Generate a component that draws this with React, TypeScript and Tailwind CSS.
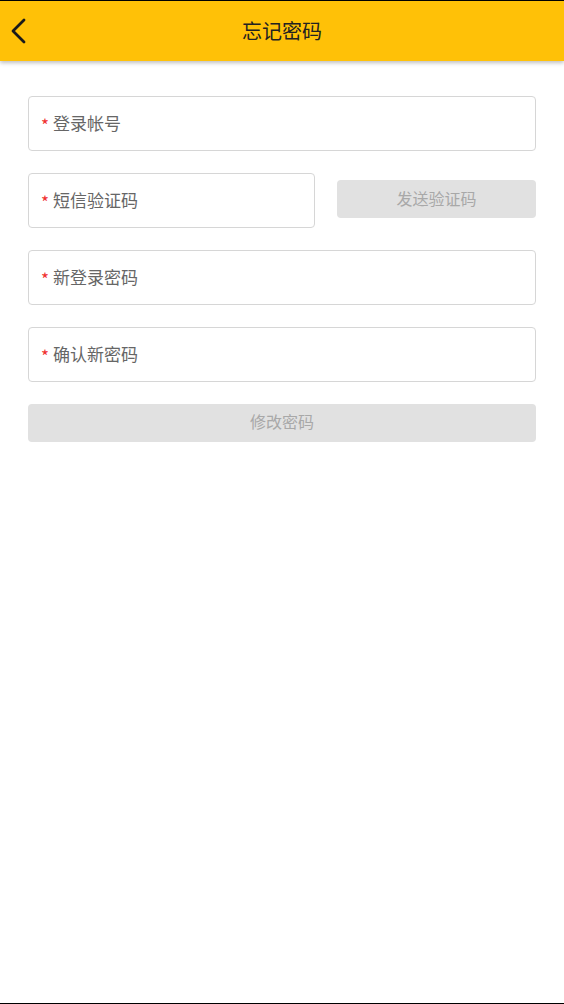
import React from "react";

const font = { fontFamily: '"Noto Sans CJK SC", "Noto Sans", sans-serif' };

function Field({ label, className = "" }: { label: string; className?: string }) {
  return (
    <div
      className={`h-[55px] rounded-[4px] border border-[#d6d6d6] bg-white flex items-center pl-[12px] pb-[2px] ${className}`}
    >
      <span className="text-[#f0302f] text-[17px] leading-none mr-[4px] mt-[4px]">*</span>
      <span className="text-[#666666] text-[17px] leading-none">{label}</span>
    </div>
  );
}

export default function App() {
  return (
    <div className="w-[564px] h-[1004px] bg-white flex flex-col border-t border-b border-black overflow-hidden" style={font}>
      <div className="relative h-[60px] bg-[#ffc107] flex items-center justify-center shadow-[0_2px_4px_rgba(0,0,0,0.25)] z-10">
        <button className="absolute left-[6px] top-0 h-full w-[24px] flex items-center justify-center">
          <svg width="17" height="26" viewBox="0 0 17 26" fill="none">
            <path d="M14 2 L3 13 L14 24" stroke="#1a1a1a" strokeWidth="2.8" strokeLinecap="round" strokeLinejoin="round" />
          </svg>
        </button>
        <span className="text-[20px] text-[#222222] leading-none">忘记密码</span>
      </div>
      <div className="flex flex-col px-[28px] pt-[35px] gap-[22px]">
        <Field label="登录帐号" />
        <div className="flex items-start gap-[22px]">
          <Field label="短信验证码" className="w-[287px]" />
          <button className="mt-[7px] flex-1 h-[38px] rounded-[4px] bg-[#e1e1e1] text-[#a8a8a8] text-[16px] leading-none flex items-center justify-center pb-[2px]">
            发送验证码
          </button>
        </div>
        <Field label="新登录密码" />
        <Field label="确认新密码" />
        <button className="h-[38px] rounded-[4px] bg-[#e1e1e1] text-[#a8a8a8] text-[16px] leading-none flex items-center justify-center pb-[4px]">
          修改密码
        </button>
      </div>
    </div>
  );
}
